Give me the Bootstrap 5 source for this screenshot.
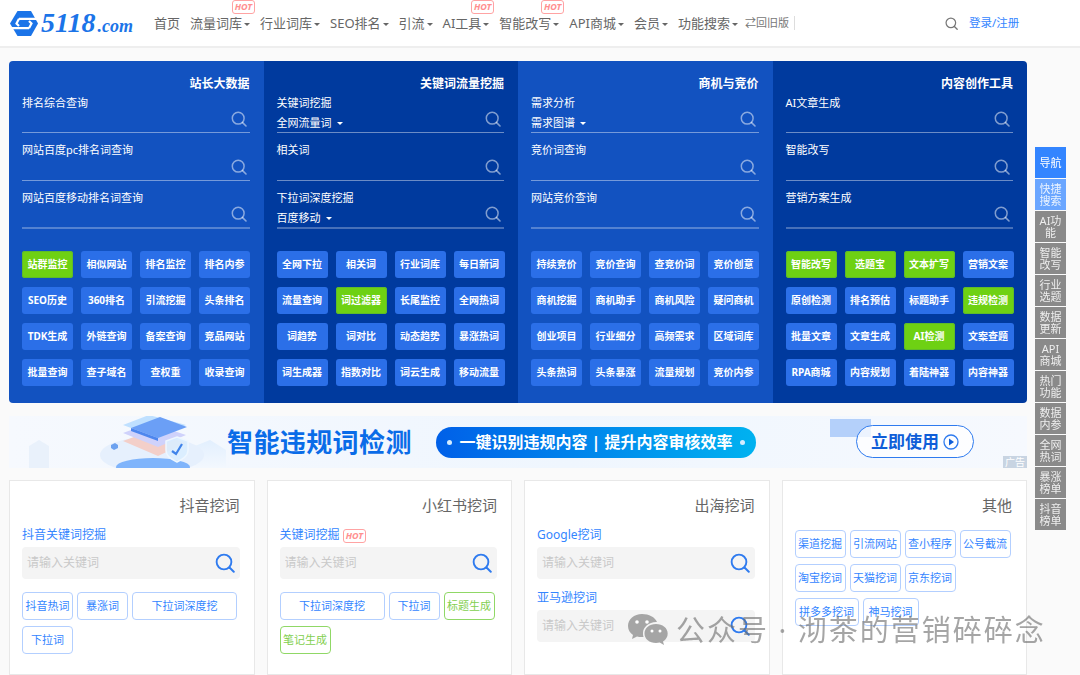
<!DOCTYPE html>
<html lang="zh-CN">
<head>
    <meta charset="UTF-8" />
    <title>5118</title>
    <meta name="viewport" content="width=device-width, initial-scale=1" />
    <link href="https://cdn.jsdelivr.net/npm/bootstrap@5.3.2/dist/css/bootstrap.min.css" rel="stylesheet" />
    <style>
        body {
            background-color: #fafafa;
            font-family: "Noto Sans", "Noto Sans CJK SC", sans-serif;
            overflow: hidden;
        }

        /* top bar */
        .top-bar { height: 48px; background: #fff; border-bottom: 2px solid #eee; padding-left: 10px; }
        .logo-text { font-family: "Liberation Serif", serif; font-weight: 700; font-style: italic; color: #1b74e8; font-size: 28px; line-height: 1; margin-left: 3px; width: 96px; white-space: nowrap; }
        .logo-text span { font-size: 18px; margin-left: 2px; }
        .top-menu { margin-left: 17px; gap: 10px; font-size: 13px; color: #666; white-space: nowrap; }
        .top-item { position: relative; color: #666; text-decoration: none; line-height: 20px; }
        .top-item.dropdown-toggle::after { border-top-width: 3.5px; border-left-width: 3px; border-right-width: 3px; margin-left: 2px; vertical-align: 2px; }
        .hot-tag { display: inline-block; border: 1px solid #ffa3a3; border-radius: 3px; color: #ff8f8f; font-size: 9px; font-weight: 700; font-style: italic; line-height: 12px; padding: 0 2px; background: #fff; }
        .top-item .hot-tag { position: absolute; top: -13px; right: -5px; }
        .old-link { font-size: 11px; color: #777; border-right: 1px solid #ddd; padding-right: 5px; margin-left: 7px; line-height: 14px; }
        .login-link { font-size: 11.5px; color: #3385ff; text-decoration: none; margin-left: 11px; }
        .top-search { margin-left: 150px; }

        .page-wrap { width: 1018px; margin: 13px 0 0 9px; }

        /* blue tool panel */
        .tool-panel { border-radius: 4px; overflow: hidden; height: 342px; color: #fff; }
        .tool-col { background: #1252c0; padding: 14px 14px 0 13px; }
        .tool-col.dark { background: #003a9e; }
        .tool-title { font-size: 12px; font-weight: 700; line-height: 18px; text-align: right; }
        .find-row { height: 48px; border-bottom: 1px solid rgba(255,255,255,.42); padding-top: 8px; font-size: 11px; line-height: 18px; }
        .find-row.first { height: 39px; padding-top: 0; margin-top: 1px; }
        .find-row.last { border-bottom: 2px solid rgba(255,255,255,.28); }
        .find-pick { margin-top: 3px; line-height: 16px; }
        .find-pick::after { border-top-width: 3.5px; border-left-width: 3.5px; border-right-width: 3.5px; margin-left: 5px; vertical-align: 2px; }
        .find-icon { width: 16px; height: 16px; color: rgba(255,255,255,.5); margin: 0 3px 5px 0; flex: none; align-self: flex-end; }
        .tool-grid { display: grid; grid-template-columns: repeat(4, 51px); column-gap: 8px; row-gap: 9px; margin-top: 22px; }
        .tool-btn { --bs-btn-padding-x: 0; --bs-btn-padding-y: 0; --bs-btn-font-size: 10px; --bs-btn-font-weight: 700; --bs-btn-line-height: 27px; --bs-btn-color: #fff; --bs-btn-bg: #2b6fe8; --bs-btn-border-color: #2b6fe8; --bs-btn-border-radius: 3px; --bs-btn-border-width: 0; white-space: nowrap; }
        .tool-btn.on { --bs-btn-bg: #6ed113; box-shadow: inset 0 0 0 1px #5fbb2a; }

        /* banner */
        .promo { position: relative; height: 52px; margin-top: 13px; background: linear-gradient(90deg, #f6f9fe, #eff6fe 55%, #f6f9fe); overflow: hidden; }
        .promo-art { width: 217px; height: 52px; flex: none; margin-left: 1px; }
        .promo-head { font-size: 26px; font-weight: 700; color: #0a6ce8; line-height: 1; white-space: nowrap; margin: 0; width: 209px; letter-spacing: .4px; }
        .promo-pill { width: 320px; height: 31px; border-radius: 16px; background: linear-gradient(90deg, #0060e8, #00b2f0); color: #fff; font-size: 16px; font-weight: 700; white-space: nowrap; gap: 7px; }
        .pill-dot { width: 5px; height: 5px; border-radius: 50%; background: #d4ecff; flex: none; }
        .promo-cta { position: absolute; left: 847px; top: 9px; width: 118px; height: 33px; border: 1px solid #2f7bef; border-radius: 17px; color: #0f5ed8; font-size: 17px; font-weight: 700; background: rgba(255,255,255,.75); gap: 4px; text-decoration: none; }
        .promo-square { position: absolute; left: 821px; top: 3px; width: 41px; height: 18px; background: #b4d0fa; }
        .promo-tag { position: absolute; right: 0; bottom: 0; width: 24px; height: 12px; background: #c8d4e2; color: #fff; font-size: 10px; line-height: 12px; text-align: center; }

        /* lower cards */
        .card-strip { gap: 12px; margin-top: 12px; }
        .mine-card { flex: 1 1 0; height: 195px; border: 1px solid #e8e8e8; border-radius: 0; background: #fff; padding: 12px 14px 0 12px; min-width: 0; }
        .mine-title { font-size: 15px; font-weight: 400; color: #666; text-align: right; line-height: 24px; margin: 0 0 9px; }
        .mine-label { font-size: 12px; color: #3385ff; line-height: 18px; margin-bottom: 3px; }
        .mine-box { height: 32px; background: #f4f4f4; border-radius: 4px; padding: 0 5px 0 0; margin-bottom: 10px; }
        .mine-box input { border: 0; background: transparent; font-size: 12px; padding: 0 5px; box-shadow: none; }
        .mine-box input::placeholder { color: #c9c9c9; }
        .mine-box svg { width: 20px; height: 20px; color: #2f7bef; flex: none; }
        .word-btn { --bs-btn-padding-x: 0; --bs-btn-padding-y: 0; --bs-btn-font-size: 11px; --bs-btn-line-height: 26px; --bs-btn-color: #3385ff; --bs-btn-border-color: #b3cfff; --bs-btn-border-radius: 4px; width: 51px; white-space: nowrap; }
        .word-btn.wide { width: 105px; }
        .word-btn.mid { width: 64px; }
        .word-btn.slim { width: 56px; }
        .word-btn.lush { --bs-btn-color: #83cf4f; --bs-btn-border-color: #90d866; }
        .word-row { gap: 6px 4px; margin-top: 3px; }
        .mine-card.plain .word-row { margin-top: 4px; }

        /* floating side menu */
        .side-menu { position: fixed; left: 1035px; top: 147px; width: 31px; gap: 1px; }
        .side-item { height: 31px; background: #8a8a8a; color: #eee; font-size: 11px; line-height: 12px; text-align: center; }
        .side-item.now { background: #3385ff; color: #fff; }
        .side-item.near { background: #6aa6ff; color: #eaf3ff; }

        /* watermark over the page */
        .stamp { position: fixed; left: 627px; top: 612px; gap: 8px; color: rgba(110,110,110,.62); font-size: 29px; line-height: 36px; letter-spacing: 2px; white-space: nowrap; pointer-events: none; }
        .stamp svg { width: 41px; height: 36px; }
    </style>
</head>
<body>
    <svg width="0" height="0" class="d-block position-absolute">
        <symbol id="glass" viewBox="0 0 16 16">
            <circle cx="7.2" cy="7.2" r="5.9" fill="none" stroke="currentColor" stroke-width="1.5" />
            <path d="M11.6 11.6 15 15" fill="none" stroke="currentColor" stroke-width="1.6" stroke-linecap="round" />
        </symbol>
    </svg>

    <!-- Top bar -->
    <nav class="top-bar d-flex align-items-center">
        <svg width="28" height="27" viewBox="0 0 28 27">
            <path d="M7.500 1H21l7 12.500L21 26H7.500L0 13.500Z" fill="#1b74e8" />
            <path d="M9 8.800H28M0 18.200H19" stroke="#fff" stroke-width="2.200" fill="none" />
            <path d="M9 8.800 6.500 13.500 9 16M19 18.200 21.500 13.500 19 11" stroke="#fff" stroke-width="2.200" fill="none" />
        </svg>
        <div class="logo-text">5118<span>.com</span></div>
        <div class="top-menu d-flex align-items-center">
            <a class="top-item" href="#">首页</a>
            <a class="top-item dropdown-toggle" href="#">流量词库<span class="hot-tag">HOT</span></a>
            <a class="top-item dropdown-toggle" href="#">行业词库</a>
            <a class="top-item dropdown-toggle" href="#">SEO排名</a>
            <a class="top-item dropdown-toggle" href="#">引流</a>
            <a class="top-item dropdown-toggle" href="#">AI工具<span class="hot-tag">HOT</span></a>
            <a class="top-item dropdown-toggle" href="#">智能改写<span class="hot-tag">HOT</span></a>
            <a class="top-item dropdown-toggle" href="#">API商城</a>
            <a class="top-item dropdown-toggle" href="#">会员</a>
            <a class="top-item dropdown-toggle" href="#">功能搜索</a>
        </div>
        <span class="old-link">⇄回旧版</span>
        <svg class="top-search" width="13" height="13" style="color:#777"><use href="#glass" /></svg>
        <a class="login-link" href="#">登录/注册</a>
    </nav>

    <div class="page-wrap">
        <!-- Tool panel -->
        <section class="tool-panel row g-0">
            <div class="col-3 tool-col">
                <div class="tool-title">站长大数据</div>
                <div class="find-row first d-flex justify-content-between"><div>排名综合查询</div><svg class="find-icon"><use href="#glass" /></svg></div>
                <div class="find-row d-flex justify-content-between"><div>网站百度pc排名词查询</div><svg class="find-icon"><use href="#glass" /></svg></div>
                <div class="find-row last d-flex justify-content-between"><div>网站百度移动排名词查询</div><svg class="find-icon"><use href="#glass" /></svg></div>
                <div class="tool-grid">
                    <a class="btn tool-btn on">站群监控</a><a class="btn tool-btn">相似网站</a><a class="btn tool-btn">排名监控</a><a class="btn tool-btn">排名内参</a>
                    <a class="btn tool-btn">SEO历史</a><a class="btn tool-btn">360排名</a><a class="btn tool-btn">引流挖掘</a><a class="btn tool-btn">头条排名</a>
                    <a class="btn tool-btn">TDK生成</a><a class="btn tool-btn">外链查询</a><a class="btn tool-btn">备案查询</a><a class="btn tool-btn">竞品网站</a>
                    <a class="btn tool-btn">批量查询</a><a class="btn tool-btn">查子域名</a><a class="btn tool-btn">查权重</a><a class="btn tool-btn">收录查询</a>
                </div>
            </div>
            <div class="col-3 tool-col dark">
                <div class="tool-title">关键词流量挖掘</div>
                <div class="find-row first d-flex justify-content-between"><div>关键词挖掘<div class="find-pick dropdown-toggle">全网流量词</div></div><svg class="find-icon"><use href="#glass" /></svg></div>
                <div class="find-row d-flex justify-content-between"><div>相关词</div><svg class="find-icon"><use href="#glass" /></svg></div>
                <div class="find-row last d-flex justify-content-between"><div>下拉词深度挖掘<div class="find-pick dropdown-toggle">百度移动</div></div><svg class="find-icon"><use href="#glass" /></svg></div>
                <div class="tool-grid">
                    <a class="btn tool-btn">全网下拉</a><a class="btn tool-btn">相关词</a><a class="btn tool-btn">行业词库</a><a class="btn tool-btn">每日新词</a>
                    <a class="btn tool-btn">流量查询</a><a class="btn tool-btn on">词过滤器</a><a class="btn tool-btn">长尾监控</a><a class="btn tool-btn">全网热词</a>
                    <a class="btn tool-btn">词趋势</a><a class="btn tool-btn">词对比</a><a class="btn tool-btn">动态趋势</a><a class="btn tool-btn">暴涨热词</a>
                    <a class="btn tool-btn">词生成器</a><a class="btn tool-btn">指数对比</a><a class="btn tool-btn">词云生成</a><a class="btn tool-btn">移动流量</a>
                </div>
            </div>
            <div class="col-3 tool-col">
                <div class="tool-title">商机与竞价</div>
                <div class="find-row first d-flex justify-content-between"><div>需求分析<div class="find-pick dropdown-toggle">需求图谱</div></div><svg class="find-icon"><use href="#glass" /></svg></div>
                <div class="find-row d-flex justify-content-between"><div>竞价词查询</div><svg class="find-icon"><use href="#glass" /></svg></div>
                <div class="find-row last d-flex justify-content-between"><div>网站竞价查询</div><svg class="find-icon"><use href="#glass" /></svg></div>
                <div class="tool-grid">
                    <a class="btn tool-btn">持续竞价</a><a class="btn tool-btn">竞价查询</a><a class="btn tool-btn">查竞价词</a><a class="btn tool-btn">竞价创意</a>
                    <a class="btn tool-btn">商机挖掘</a><a class="btn tool-btn">商机助手</a><a class="btn tool-btn">商机风险</a><a class="btn tool-btn">疑问商机</a>
                    <a class="btn tool-btn">创业项目</a><a class="btn tool-btn">行业细分</a><a class="btn tool-btn">高频需求</a><a class="btn tool-btn">区域词库</a>
                    <a class="btn tool-btn">头条热词</a><a class="btn tool-btn">头条暴涨</a><a class="btn tool-btn">流量规划</a><a class="btn tool-btn">竞价内参</a>
                </div>
            </div>
            <div class="col-3 tool-col dark">
                <div class="tool-title">内容创作工具</div>
                <div class="find-row first d-flex justify-content-between"><div>AI文章生成</div><svg class="find-icon"><use href="#glass" /></svg></div>
                <div class="find-row d-flex justify-content-between"><div>智能改写</div><svg class="find-icon"><use href="#glass" /></svg></div>
                <div class="find-row last d-flex justify-content-between"><div>营销方案生成</div><svg class="find-icon"><use href="#glass" /></svg></div>
                <div class="tool-grid">
                    <a class="btn tool-btn on">智能改写</a><a class="btn tool-btn on">选题宝</a><a class="btn tool-btn on">文本扩写</a><a class="btn tool-btn">营销文案</a>
                    <a class="btn tool-btn">原创检测</a><a class="btn tool-btn">排名预估</a><a class="btn tool-btn">标题助手</a><a class="btn tool-btn on">违规检测</a>
                    <a class="btn tool-btn">批量文章</a><a class="btn tool-btn">文章生成</a><a class="btn tool-btn on">AI检测</a><a class="btn tool-btn">文案查题</a>
                    <a class="btn tool-btn">RPA商城</a><a class="btn tool-btn">内容规划</a><a class="btn tool-btn">着陆神器</a><a class="btn tool-btn">内容神器</a>
                </div>
            </div>
        </section>

        <!-- Banner -->
        <section class="promo d-flex align-items-center">
            <svg class="promo-art" viewBox="10 416 217 52">
                <defs>
                    <linearGradient id="floor" x1="0" y1="0" x2="0" y2="1"><stop offset="0" stop-color="#e2effe" /><stop offset="1" stop-color="#f3f8fe" /></linearGradient>
                </defs>
                <path d="M29 446 39 440 49 446V468H29Z" fill="#e9f1fb" />
                <path d="M195 446 210 440 226 450V468H195Z" fill="url(#floor)" />
                <ellipse cx="152" cy="455" rx="52" ry="18" fill="#e6f0fd" />
                <ellipse cx="153" cy="467" rx="37" ry="9" fill="#7fb4fb" />
                <path d="M123 441 150 431 186 443 158 456Z" fill="#f3cfc9" />
                <path d="M123 433 150 423 186 435 158 447Z" fill="#cfd2fb" />
                <path d="M123 425 149 415 186 425 158 438Z" fill="#bfe0ff" />
                <path d="M131 428 160 417 187 427 158 438Z" fill="#6b9ff6" />
                <path d="M131 428 158 438V441L131 431Z" fill="#4d86ee" />
                <path d="M177 437 188 441V450C188 456 183 459 177 462 171 459 166 456 166 450V441Z" fill="#d9edff" fill-opacity=".9" stroke="#eef7ff" stroke-width="1.5" />
                <path d="M172 451 176 454 182 444" fill="none" stroke="#3f83ea" stroke-width="2.2" />
                <path d="M111 445 115 443 118 445V448L114 450 111 448Z" fill="#6da2ef" />
            </svg>
            <h2 class="promo-head">智能违规词检测</h2>
            <div class="promo-pill d-flex align-items-center justify-content-center">
                <i class="pill-dot"></i><span>一键识别违规内容 | 提升内容审核效率</span><i class="pill-dot"></i>
            </div>
            <i class="promo-square"></i>
            <a class="promo-cta d-flex align-items-center justify-content-center">立即使用
                <svg width="16" height="16" viewBox="0 0 16 16"><circle cx="8" cy="8" r="7" fill="none" stroke="#2f7bef" stroke-width="1.3" /><path d="M6 4.500 11 8 6 11.500Z" fill="#0f5ed8" /></svg>
            </a>
            <span class="promo-tag">广告</span>
        </section>

        <!-- Word mining cards -->
        <section class="card-strip d-flex">
            <div class="card mine-card">
                <h3 class="mine-title">抖音挖词</h3>
                <div class="mine-label">抖音关键词挖掘</div>
                <div class="mine-box d-flex align-items-center"><input class="form-control" placeholder="请输入关键词" /><svg><use href="#glass" /></svg></div>
                <div class="word-row d-flex flex-wrap">
                    <a class="btn word-btn">抖音热词</a><a class="btn word-btn">暴涨词</a><a class="btn word-btn wide">下拉词深度挖</a><a class="btn word-btn">下拉词</a>
                </div>
            </div>
            <div class="card mine-card">
                <h3 class="mine-title">小红书挖词</h3>
                <div class="mine-label">关键词挖掘 <span class="hot-tag">HOT</span></div>
                <div class="mine-box d-flex align-items-center"><input class="form-control" placeholder="请输入关键词" /><svg><use href="#glass" /></svg></div>
                <div class="word-row d-flex flex-wrap">
                    <a class="btn word-btn wide">下拉词深度挖</a><a class="btn word-btn">下拉词</a><a class="btn word-btn lush">标题生成</a><a class="btn word-btn lush">笔记生成</a>
                </div>
            </div>
            <div class="card mine-card">
                <h3 class="mine-title">出海挖词</h3>
                <div class="mine-label">Google挖词</div>
                <div class="mine-box d-flex align-items-center"><input class="form-control" placeholder="请输入关键词" /><svg><use href="#glass" /></svg></div>
                <div class="mine-label">亚马逊挖词</div>
                <div class="mine-box d-flex align-items-center"><input class="form-control" placeholder="请输入关键词" /><svg><use href="#glass" /></svg></div>
            </div>
            <div class="card mine-card plain">
                <h3 class="mine-title">其他</h3>
                <div class="word-row d-flex flex-wrap">
                    <a class="btn word-btn">渠道挖掘</a><a class="btn word-btn">引流网站</a><a class="btn word-btn">查小程序</a><a class="btn word-btn">公号截流</a>
                    <a class="btn word-btn">淘宝挖词</a><a class="btn word-btn">天猫挖词</a><a class="btn word-btn">京东挖词</a>
                    <a class="btn word-btn mid">拼多多挖词</a><a class="btn word-btn slim">神马挖词</a>
                </div>
            </div>
        </section>
    </div>

    <!-- Side menu -->
    <aside class="side-menu d-flex flex-column">
        <div class="side-item now d-flex align-items-center justify-content-center">导航</div>
        <div class="side-item near d-flex align-items-center justify-content-center">快捷<br />搜索</div>
        <div class="side-item d-flex align-items-center justify-content-center">AI功<br />能</div>
        <div class="side-item d-flex align-items-center justify-content-center">智能<br />改写</div>
        <div class="side-item d-flex align-items-center justify-content-center">行业<br />选题</div>
        <div class="side-item d-flex align-items-center justify-content-center">数据<br />更新</div>
        <div class="side-item d-flex align-items-center justify-content-center">API<br />商城</div>
        <div class="side-item d-flex align-items-center justify-content-center">热门<br />功能</div>
        <div class="side-item d-flex align-items-center justify-content-center">数据<br />内参</div>
        <div class="side-item d-flex align-items-center justify-content-center">全网<br />热词</div>
        <div class="side-item d-flex align-items-center justify-content-center">暴涨<br />榜单</div>
        <div class="side-item d-flex align-items-center justify-content-center">抖音<br />榜单</div>
    </aside>

    <!-- Watermark -->
    <div class="stamp d-flex align-items-center">
        <svg viewBox="0 0 41 36">
            <path d="M15 2C7 2 1 7 1 14c0 4 2 7 5 9l-1 4 5-2.500c1.500.4 3 .6 5 .6l1.500-.1C16 23 16 22 16 21c0-6 6-11 13-11h1C28 5 22 2 15 2Z" fill="#9c9c9c" fill-opacity=".9" />
            <path d="M29 12c-6.500 0-11.500 4-11.500 9.500S22.500 31 29 31c1.300 0 2.600-.2 3.700-.5L37 33l-1-3.500c3-1.800 4.700-4.700 4.700-8C40.700 16 35.500 12 29 12Z" fill="#9c9c9c" fill-opacity=".9" />
            <circle cx="10" cy="10" r="1.800" fill="#fff" /><circle cx="20" cy="10" r="1.800" fill="#fff" />
            <circle cx="25" cy="19" r="1.500" fill="#fff" /><circle cx="33" cy="19" r="1.500" fill="#fff" />
        </svg>
        <span>公众号 · 沏茶的营销碎碎念</span>
    </div>

    <script src="https://cdn.jsdelivr.net/npm/bootstrap@5.3.2/dist/js/bootstrap.bundle.min.js"></script>
</body>
</html>
